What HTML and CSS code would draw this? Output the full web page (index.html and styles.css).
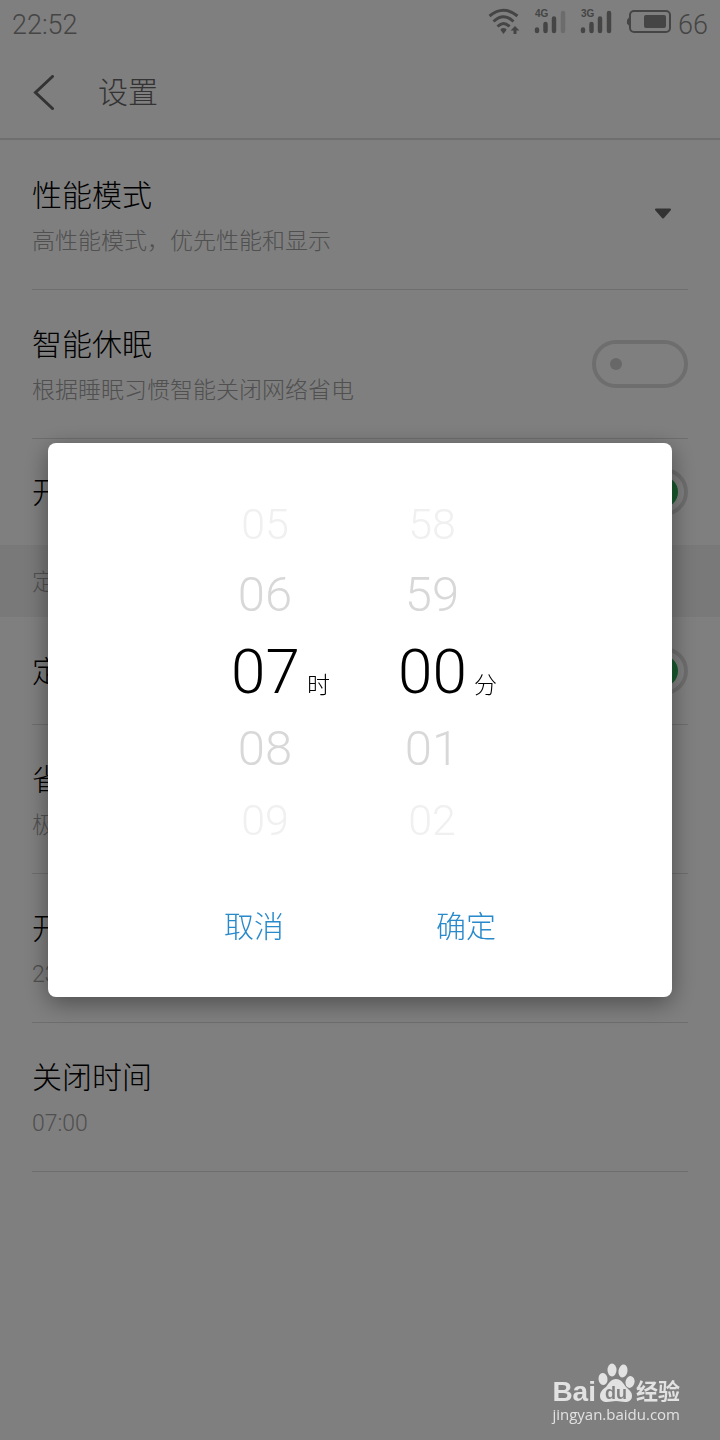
FILE: index.html
```html
<!DOCTYPE html>
<html lang="zh-CN">
<head>
    <meta charset="UTF-8">
    <meta name="viewport" content="width=device-width, initial-scale=1">
    <title>设置</title>
    <link rel="stylesheet" href="styles.css">
</head>
<body>
    <div class="statusbar">
        <span class="clock">22:52</span>
        <div class="status-icons">
            <!-- wifi -->
            <svg class="wifi" width="32" height="28" viewBox="0 0 32 28" fill="none" stroke="#8a8a8a" stroke-width="3">
                <path d="M1.500 8Q15.500 -3.500 29.500 8M5.500 13.500Q15.500 4 25.500 13.500M9.500 18.500Q15.500 12.500 21.500 18.500"/>
                <path d="M12.500 22a3 2 0 0 1 6 0l-3 4z" fill="#8a8a8a" stroke="none"/>
                <path d="M27 18l4.500 4.500h-3V26h-3v-3.500h-3z" fill="#8a8a8a" stroke="none"/>
            </svg>
            <!-- signal -->
            <svg class="signal" width="32" height="28" viewBox="0 0 32 28" stroke="#8a8a8a" stroke-width="4.500" stroke-linecap="round">
                <path d="M3 21.500v1.500M11.500 16v7M20 10.500v12.500"/>
                <path d="M29 5v18" stroke="#d8d8d8"/>
                <text class="net" x="1" y="9">4G</text>
            </svg>
            <svg class="signal" width="32" height="28" viewBox="0 0 32 28" stroke="#8a8a8a" stroke-width="4.500" stroke-linecap="round">
                <path d="M3 21.500v1.500M11.500 16v7M20 10.500v12.500M29 5v18"/>
                <text class="net" x="1" y="9">3G</text>
            </svg>
            <!-- battery -->
            <svg class="battery" width="46" height="28" viewBox="0 0 46 28">
                <path d="M4 8v11l-3-3.500v-3.500z" fill="#8a8a8a"/>
                <rect x="4" y="3" width="40" height="21" rx="4" fill="none" stroke="#8a8a8a" stroke-width="2"/>
                <rect x="18" y="7" width="22" height="13" rx="2" fill="#8a8a8a"/>
            </svg>
            <span class="level">66</span>
        </div>
    </div>

    <header class="header">
        <button class="back" type="button" aria-label="返回">
            <svg width="24" height="36" viewBox="0 0 24 36" fill="none" stroke="#666" stroke-width="3" stroke-linecap="round">
                <path d="M20.500 1.500L3.500 17.500L20.500 33.500"/>
            </svg>
        </button>
        <h1>设置</h1>
    </header>

    <main class="list">
        <div class="row">
            <div class="text">
                <h2>性能模式</h2>
                <p>高性能模式，优先性能和显示</p>
            </div>
            <button class="more" type="button" aria-label="选择性能模式">
                <svg width="18" height="14" viewBox="0 0 18 14">
                    <path d="M2 1.500h14L9 9.500z" fill="#666" stroke="#666" stroke-width="2" stroke-linejoin="round"/>
                </svg>
            </button>
        </div>
        <div class="row">
            <label class="text" for="sleep">
                <span class="title">智能休眠</span>
                <span class="desc">根据睡眠习惯智能关闭网络省电</span>
            </label>
            <input class="switch" type="checkbox" id="sleep">
        </div>
        <div class="row short last">
            <label class="text" for="remind"><span class="title">开启提醒</span></label>
            <input class="switch" type="checkbox" id="remind" checked>
        </div>
        <div class="section">定时设置</div>
        <div class="row short">
            <label class="text" for="timer"><span class="title">定时开关</span></label>
            <input class="switch" type="checkbox" id="timer" checked>
        </div>
        <div class="row">
            <div class="text">
                <h2>省电模式</h2>
                <p>极致省电</p>
            </div>
        </div>
        <div class="row">
            <div class="text">
                <h2>开启时间</h2>
                <p>23:00</p>
            </div>
        </div>
        <div class="row">
            <div class="text">
                <h2>关闭时间</h2>
                <p>07:00</p>
            </div>
        </div>
    </main>

    <!-- time picker -->
    <div class="overlay">
        <div class="dialog" role="dialog" aria-modal="true" aria-label="关闭时间">
            <div class="picker">
                <div class="wheel">
                    <ul>
                        <li class="far">05</li>
                        <li class="near">06</li>
                        <li class="current">07</li>
                        <li class="near">08</li>
                        <li class="far">09</li>
                    </ul>
                    <span class="unit">时</span>
                </div>
                <div class="wheel">
                    <ul>
                        <li class="far">58</li>
                        <li class="near">59</li>
                        <li class="current">00</li>
                        <li class="near">01</li>
                        <li class="far">02</li>
                    </ul>
                    <span class="unit">分</span>
                </div>
            </div>
            <div class="actions">
                <button type="button">取消</button>
                <button type="button">确定</button>
            </div>
        </div>
    </div>

    <div class="watermark">
        <div class="brand">
            <span class="bai">Bai</span>
            <svg width="40" height="42" viewBox="0 0 40 42" fill="#e2e2e2">
                <ellipse cx="7" cy="17" rx="4.500" ry="6" transform="rotate(-8 7 17)"/>
                <ellipse cx="16" cy="8" rx="4.500" ry="6.500"/>
                <ellipse cx="27" cy="9" rx="4.500" ry="6.500" transform="rotate(10 27 9)"/>
                <ellipse cx="34" cy="20" rx="4.500" ry="6" transform="rotate(12 34 20)"/>
                <path d="M20 17c5 0 7 4 10 8c4 4 6 5 6 9c0 4-3 6-7 6c-3 0-6-1-9-1s-6 1-9 1c-4 0-7-2-7-6c0-4 2-6 6-9c3-4 5-8 10-8z"/>
                <text class="du" x="20" y="37" text-anchor="middle">du</text>
            </svg>
            <span class="jingyan">经验</span>
        </div>
        <div class="site">jingyan.baidu.com</div>
    </div>
</body>
</html>
```
FILE: styles.css
```css
* {
    box-sizing: border-box;
}

body {
    margin: 0;
    min-height: 100vh;
    background-color: #fff;
    color: #000;
    font-family: Roboto, "Noto Sans CJK SC", sans-serif;
    font-weight: 300;
}

h1, h2, p, ul {
    margin: 0;
    padding: 0;
    font-weight: 300;
}

button {
    padding: 0;
    border: none;
    background: none;
    font-family: inherit;
    font-weight: 300;
}

svg {
    display: block;
}

/* status bar */
.statusbar {
    display: flex;
    justify-content: space-between;
    height: 48px;
    padding: 0 12px;
    font-size: 27px;
    line-height: 50px;
    color: #8a8a8a;
}

.status-icons {
    display: flex;
    align-items: flex-start;
}

.status-icons svg {
    margin-top: 8px;
}

.wifi, .signal {
    margin-right: 14px;
}

.battery {
    margin-right: 6px;
}

.net {
    font-family: "Liberation Sans", sans-serif;
    font-size: 10px;
    font-weight: bold;
    fill: #8a8a8a;
    stroke: none;
}

/* title bar */
.header {
    display: flex;
    align-items: center;
    height: 92px;
    padding: 0 32px;
    border-bottom: 2px solid #dcdcdc;
}

.back {
    margin-right: 42px;
}

.header h1 {
    font-size: 30px;
    line-height: 40px;
    color: #666;
}

/* settings */
.list {
    padding-top: 1px;
}

.row {
    display: flex;
    align-items: center;
    justify-content: space-between;
    height: 149px;
    margin: 0 32px;
    border-bottom: 1px solid #dcdcdc;
}

.row.short {
    height: 108px;
}

.row.last {
    height: 106px;
    border-bottom: none;
}

.text {
    flex: 1;
    padding-top: 8px;
}

.short .text {
    padding-top: 2px;
}

.row h2, .title {
    display: block;
    font-size: 30px;
    line-height: 46px;
}

.row p, .desc {
    display: block;
    font-size: 23px;
    line-height: 46px;
    color: #a0a0a0;
}

.more {
    margin-right: 16px;
}

.section {
    height: 72px;
    padding: 0 32px;
    background-color: #f2f2f2;
    font-size: 23px;
    line-height: 76px;
    color: #a0a0a0;
}

.switch {
    appearance: none;
    position: relative;
    width: 96px;
    height: 48px;
    margin: 0;
    border: 4px solid #dcdcdc;
    border-radius: 24px;
}

.switch::after {
    content: "";
    position: absolute;
    top: 14px;
    left: 14px;
    width: 12px;
    height: 12px;
    border-radius: 50%;
    background-color: #d0d0d0;
}

.switch:checked::after {
    top: 4px;
    left: 50px;
    width: 32px;
    height: 32px;
    background-color: #32b45c;
}

/* dialog */
.overlay {
    position: fixed;
    top: 0;
    right: 0;
    bottom: 0;
    left: 0;
    display: flex;
    align-items: center;
    padding: 0 48px;
    background-color: rgba(0, 0, 0, 0.5);
}

.dialog {
    flex: 1;
    padding: 42px 0 46px;
    border-radius: 8px;
    background-color: #fff;
    box-shadow: 0 6px 24px rgba(0, 0, 0, 0.4);
}

.picker {
    display: flex;
    justify-content: center;
    gap: 68px;
    padding-left: 8px;
}

.wheel {
    display: flex;
    align-items: center;
    gap: 8px;
}

.wheel ul {
    width: 68px;
    list-style: none;
    text-align: center;
}

.far {
    font-size: 43px;
    line-height: 78px;
    color: #f0f0f0;
}

.near {
    font-size: 49px;
    line-height: 64px;
    color: #d8d8d8;
}

.current {
    font-size: 62px;
    line-height: 90px;
}

.unit {
    padding-top: 28px;
    font-size: 23px;
    line-height: 24px;
}

.actions {
    display: flex;
    justify-content: center;
    gap: 152px;
    padding-top: 44px;
}

.actions button {
    font-size: 30px;
    line-height: 48px;
    color: #298acb;
}

/* watermark */
.watermark {
    position: fixed;
    right: 40px;
    bottom: 16px;
    color: #e2e2e2;
}

.brand {
    display: flex;
    align-items: flex-end;
}

.bai {
    font-family: "Liberation Sans", sans-serif;
    font-size: 28px;
    font-weight: bold;
    line-height: 24px;
}

.du {
    font-family: "Liberation Sans", sans-serif;
    font-size: 18px;
    font-weight: bold;
    fill: #808080;
}

.jingyan {
    font-size: 22px;
    font-weight: bold;
    line-height: 24px;
}

.site {
    font-family: "Open Sans", sans-serif;
    font-size: 15px;
    font-weight: 400;
    line-height: 20px;
}
```
